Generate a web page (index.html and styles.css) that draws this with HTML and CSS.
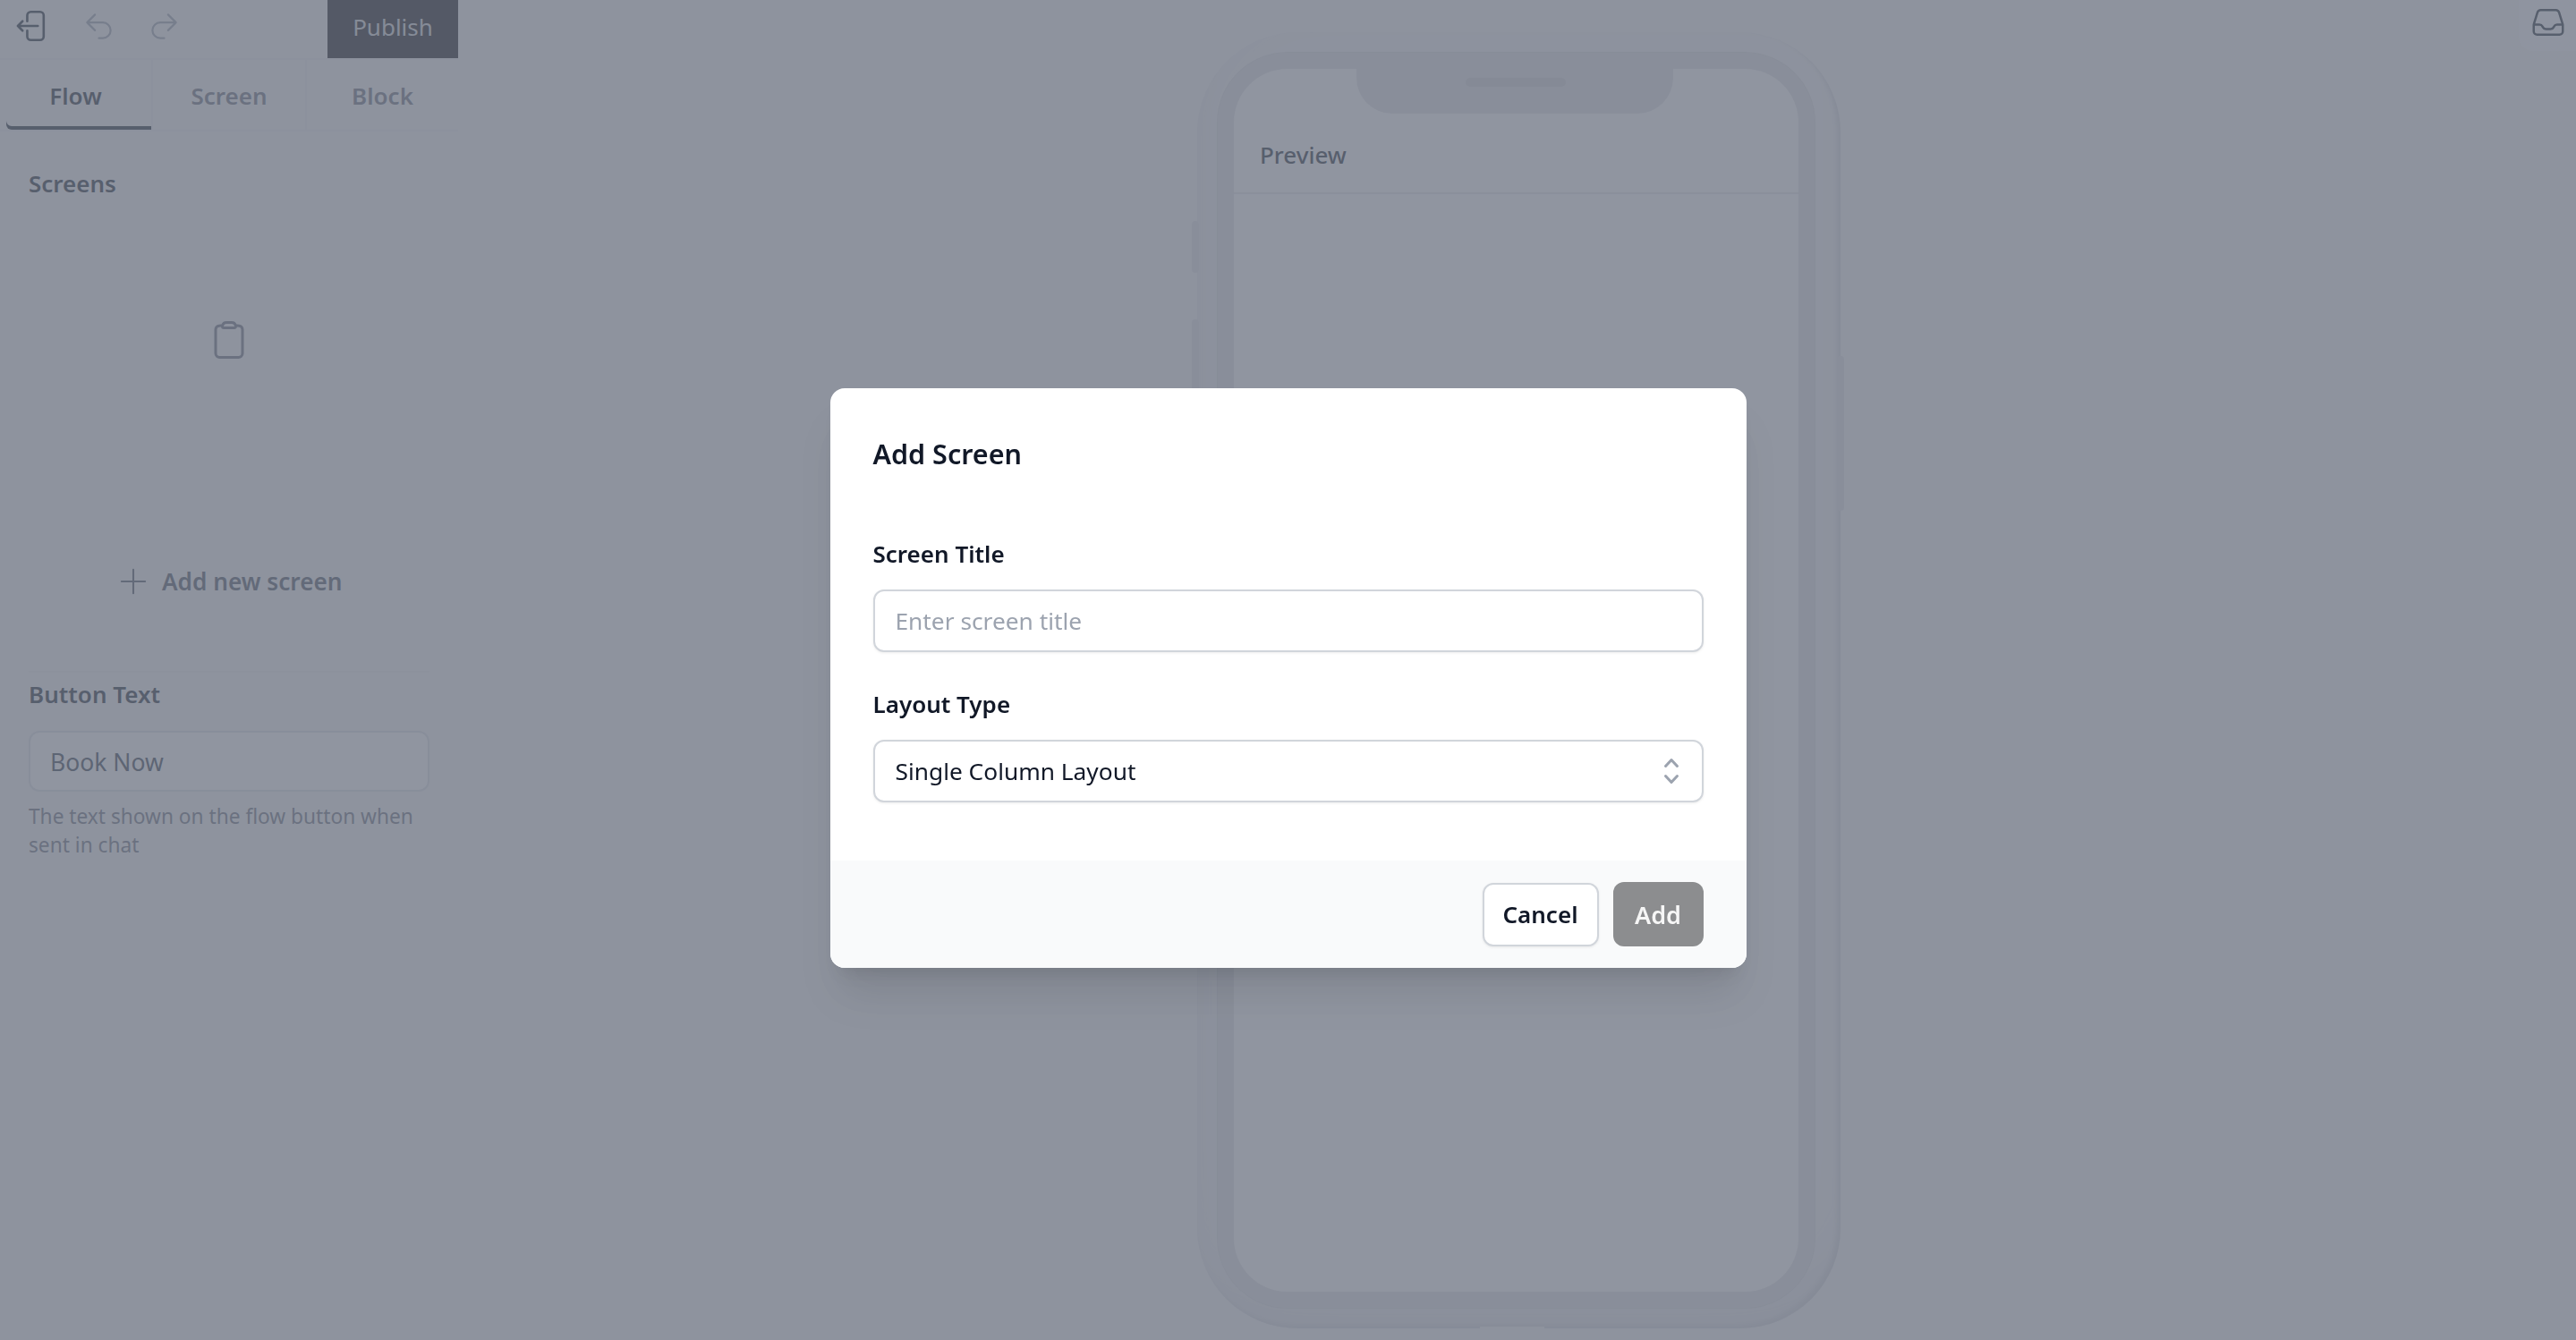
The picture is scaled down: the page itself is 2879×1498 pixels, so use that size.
FILE: index.html
```html
<!DOCTYPE html>
<html lang="en">
<head>
    <meta charset="UTF-8">
    <meta name="viewport" content="width=device-width, initial-scale=1.0">
    <title>Flow Builder</title>
    <link rel="stylesheet" href="styles.css">
</head>
<body>
    <div class="page">
        <aside class="sidebar">
            <div class="toolbar">
                <svg class="icon-back" viewBox="0 0 24 24"><path d="M8.25 9V5.25A2.25 2.25 0 0110.5 3h6a2.25 2.25 0 012.25 2.25v13.5A2.25 2.25 0 0116.5 21h-6a2.25 2.25 0 01-2.25-2.25V15m-3 0l-3-3m0 0l3-3m-3 3H15"/></svg>
                <svg class="icon-history" viewBox="0 0 24 24"><path d="M9 15L3 9m0 0l6-6M3 9h12a6 6 0 010 12h-3"/></svg>
                <svg class="icon-history" viewBox="0 0 24 24"><path d="M15 15l6-6m0 0l-6-6m6 6H9a6 6 0 000 12h3"/></svg>
                <button class="publish">Publish</button>
            </div>
            <div class="tabs">
                <div class="tab tab-active">Flow</div>
                <div class="tab">Screen</div>
                <div class="tab">Block</div>
            </div>
            <div class="panel">
                <h3 class="section-title">Screens</h3>
                <div class="empty-icon">
                    <svg viewBox="0 0 24 24"><path d="M15.666 3.888A2.25 2.25 0 0013.5 2.25h-3c-1.03 0-1.9.693-2.166 1.638m7.332 0c.055.194.084.4.084.612v0a.75.75 0 01-.75.75H9a.75.75 0 01-.75-.75v0c0-.212.03-.418.084-.612m7.332 0c.646.049 1.288.11 1.927.184 1.1.128 1.907 1.077 1.907 2.185V19.5a2.25 2.25 0 01-2.25 2.25H6.75A2.25 2.25 0 014.5 19.5V6.257c0-1.108.806-2.057 1.907-2.185a48.208 48.208 0 011.927-.184"/></svg>
                </div>
                <div class="add-screen">
                    <svg viewBox="0 0 24 24"><path d="M12 4.5v15m7.5-7.5h-15"/></svg>
                    <span>Add new screen</span>
                </div>
                <hr class="divider">
                <h3 class="section-title field-title">Button Text</h3>
                <input class="side-input" type="text" value="Book Now">
                <p class="help">The text shown on the flow button when sent in chat</p>
            </div>
        </aside>

        <main class="stage">
            <div class="phone">
                <span class="side-key key-a"></span>
                <span class="side-key key-b"></span>
                <span class="side-key key-c"></span>
                <span class="bottom-notch"></span>
                <div class="bezel">
                    <div class="screen">
                        <div class="notch"><span class="speaker"></span></div>
                        <div class="preview-head">Preview</div>
                    </div>
                </div>
            </div>
            <div class="inbox">
                <svg viewBox="0 0 24 24"><path d="M2.25 13.5h3.86a2.25 2.25 0 012.012 1.244l.256.512a2.25 2.25 0 002.013 1.244h3.218a2.25 2.25 0 002.013-1.244l.256-.512a2.25 2.25 0 012.013-1.244h3.859m-19.5.338V18a2.25 2.25 0 002.25 2.25h15A2.25 2.25 0 0021.75 18v-4.162c0-.224-.034-.447-.1-.661L19.24 5.338A2.25 2.25 0 0017.088 3.75H6.912a2.25 2.25 0 00-2.15 1.588L2.35 13.177a2.25 2.25 0 00-.1.661z"/></svg>
            </div>
        </main>
    </div>

    <div class="overlay">
        <div class="modal">
            <div class="modal-body">
                <h2 class="modal-title">Add Screen</h2>
                <label class="field-label first">Screen Title</label>
                <input class="field" type="text" placeholder="Enter screen title">
                <label class="field-label">Layout Type</label>
                <button class="field select">
                    <span>Single Column Layout</span>
                    <svg viewBox="0 0 20 20"><path d="M10 3a.75.75 0 01.55.24l3.25 3.5a.75.75 0 11-1.1 1.02L10 4.852 7.3 7.76a.75.75 0 01-1.1-1.02l3.25-3.5A.75.75 0 0110 3zm-3.76 9.2a.75.75 0 011.06.04l2.7 2.908 2.7-2.908a.75.75 0 111.1 1.02l-3.25 3.5a.75.75 0 01-1.1 0l-3.25-3.5a.75.75 0 01.04-1.06z"/></svg>
                </button>
            </div>
            <div class="modal-footer">
                <button class="btn-cancel">Cancel</button>
                <button class="btn-add">Add</button>
            </div>
        </div>
    </div>
</body>
</html>
```

FILE: styles.css
```css
* {
    box-sizing: border-box;
}
body {
    margin: 0;
    height: 1498px;
    overflow: hidden;
    font-family: "Noto Sans", "Open Sans", Arial, sans-serif;
    background: #f6f6f7;
    color: #111827;
}
svg {
    fill: none;
    stroke: currentColor;
    stroke-width: 1.5;
    stroke-linecap: round;
    stroke-linejoin: round;
    flex-shrink: 0;
}
button {
    font-family: inherit;
}

.page {
    display: flex;
    height: 100%;
}

/* left column */
.sidebar {
    width: 512px;
    flex-shrink: 0;
}
.toolbar {
    display: flex;
    align-items: flex-start;
    height: 65px;
    padding-left: 16px;
    color: #1f2937;
}
.icon-back {
    width: 42px;
    height: 42px;
    margin: 8px 35px 0 0;
}
.icon-history {
    width: 35px;
    height: 35px;
    margin: 12px 38px 0 0;
    color: #9ca3af;
}
.publish {
    margin-left: auto;
    width: 146px;
    height: 65px;
    padding: 0 0 6px;
    border: none;
    background: #131318;
    color: #d1d5db;
    font-size: 26px;
}
.tabs {
    display: grid;
    grid-template-columns: 171px 172px 169px;
    height: 82px;
    border-top: 2px solid #f0f0f2;
    border-bottom: 2px solid #f0f0f2;
}
.tab {
    display: flex;
    align-items: center;
    justify-content: center;
    padding-top: 2px;
    border-right: 2px solid #f0f0f2;
    font-size: 26px;
    font-weight: 600;
    color: #6b7280;
}
.tab:last-child {
    border-right: none;
}
.tab-active {
    color: #1f2937;
    margin-left: 7px;
    padding-right: 7px;
    box-shadow: inset 0 -4px 0 #1f2937;
    border-bottom-left-radius: 6px;
}
.panel {
    padding: 40px 32px 0;
}
.section-title {
    margin: 0;
    font-size: 26px;
    line-height: 36px;
    font-weight: 600;
    color: #1f2937;
}
.empty-icon {
    margin-top: 133px;
    display: flex;
    justify-content: center;
    color: #6b7280;
}
.empty-icon svg {
    width: 48px;
    height: 48px;
}
.add-screen {
    display: flex;
    align-items: center;
    height: 42px;
    margin-top: 225px;
    padding-left: 96px;
    font-size: 26.2px;
    font-weight: 600;
    color: #4b5563;
}
.add-screen svg {
    width: 42px;
    height: 42px;
    margin-right: 11px;
    stroke-width: 1.2;
}
.divider {
    border: none;
    border-top: 2px solid #eeeef0;
    margin: 79px 0 0;
}
.field-title {
    margin-top: 6px;
}
.side-input {
    display: block;
    width: 100%;
    height: 68px;
    margin-top: 23px;
    padding: 2px 22px 0;
    border: 2px solid #dfe1e5;
    border-radius: 12px;
    background: #fdfdfe;
    font-family: inherit;
    font-size: 26.5px;
    color: #374151;
}
.help {
    margin: 12px 0 0;
    font-size: 22.7px;
    line-height: 32px;
    color: #6b7280;
}

/* phone preview */
.stage {
    flex: 1;
    display: flex;
    justify-content: center;
    padding-top: 36px;
    padding-left: 4px;
}
.phone {
    position: relative;
    width: 719px;
    height: 1449px;
    padding: 23px 29px 23px 23px;
    border-radius: 112px;
    background: #f3f3f5;
    box-shadow: inset -4px -4px 5px #d6d7db, inset 0 -60px 60px -30px #e4e4e8, inset 30px 0 40px -30px #e6e6e9;
}
.bezel {
    height: 100%;
    padding: 18px 18px;
    border-radius: 78px;
    background: #e4e4e7;
    box-shadow: 0 0 0 1px #dcdde0;
}
.screen {
    position: relative;
    height: 100%;
    border-radius: 60px;
    background: #ffffff;
    overflow: hidden;
}
.notch {
    position: absolute;
    top: 0;
    left: 137px;
    width: 354px;
    height: 50px;
    background: #e4e4e7;
    border-radius: 0 0 40px 40px;
}
.speaker {
    position: absolute;
    top: 10px;
    left: 122px;
    width: 112px;
    height: 10px;
    border-radius: 5px;
    background: #d1d2d7;
}
.preview-head {
    height: 140px;
    padding: 78px 29px 0;
    border-bottom: 2px solid #e5e7eb;
    font-size: 26px;
    line-height: 36px;
    font-weight: 500;
    color: #1f2937;
}
.side-key {
    position: absolute;
    width: 8px;
    border-radius: 4px;
    background: #e3e3e7;
}
.key-a {
    left: -6px;
    top: 211px;
    height: 58px;
}
.key-b {
    left: -6px;
    top: 321px;
    height: 120px;
}
.key-c {
    right: -4px;
    top: 362px;
    height: 173px;
}
.bottom-notch {
    position: absolute;
    left: 316px;
    bottom: 0;
    width: 72px;
    height: 2px;
    background: #f6f6f7;
}
.inbox {
    position: absolute;
    top: 0;
    right: 0;
    width: 64px;
    height: 57px;
    padding: 5px 0 0 13px;
    border-bottom-left-radius: 16px;
    background: #fcfcfd;
    color: #1f2937;
}
.inbox svg {
    width: 40px;
    height: 40px;
}

/* dialog */
.overlay {
    position: fixed;
    inset: 0;
    display: flex;
    justify-content: center;
    align-items: center;
    padding-top: 18px;
    background: rgba(107, 114, 128, 0.75);
}
.modal {
    width: 1024px;
    border-radius: 16px;
    overflow: hidden;
    background: #ffffff;
    box-shadow: 0 38px 48px -10px rgba(0, 0, 0, 0.1), 0 16px 20px -12px rgba(0, 0, 0, 0.1);
}
.modal-body {
    padding: 53px 48px 65px;
}
.modal-title {
    margin: 0;
    font-size: 30.5px;
    line-height: 40px;
    font-weight: 600;
}
.field-label {
    display: block;
    margin-top: 41px;
    font-size: 26px;
    line-height: 36px;
    font-weight: 600;
    position: relative;
    top: -1px;
}
.field-label.first {
    margin-top: 75px;
}
.field {
    display: block;
    width: 100%;
    height: 70px;
    margin-top: 21px;
    padding: 0 23px;
    border: 2px solid #d1d5db;
    border-radius: 12px;
    background: #ffffff;
    box-shadow: 0 1px 3px rgba(0, 0, 0, 0.08);
    font-family: inherit;
    font-size: 26.3px;
    color: #111827;
}
.field::placeholder {
    color: #9ca3af;
    opacity: 1;
}
.select {
    display: flex;
    align-items: center;
    justify-content: space-between;
    padding-right: 14px;
}
.select svg {
    width: 40px;
    height: 40px;
    fill: #9ca3af;
    stroke: none;
}
.modal-footer {
    display: flex;
    justify-content: flex-end;
    align-items: center;
    gap: 16px;
    height: 120px;
    padding: 0 48px;
    background: #f9fafb;
}
.btn-cancel {
    width: 130px;
    height: 71px;
    border: 2px solid #d1d5db;
    border-radius: 12px;
    background: #ffffff;
    box-shadow: 0 1px 3px rgba(0, 0, 0, 0.08);
    font-size: 26px;
    font-weight: 600;
    color: #111827;
}
.btn-add {
    width: 101px;
    height: 72px;
    border: none;
    border-radius: 12px;
    background: #8c8d8f;
    font-size: 27px;
    font-weight: 600;
    color: #f6f6f6;
}
```
